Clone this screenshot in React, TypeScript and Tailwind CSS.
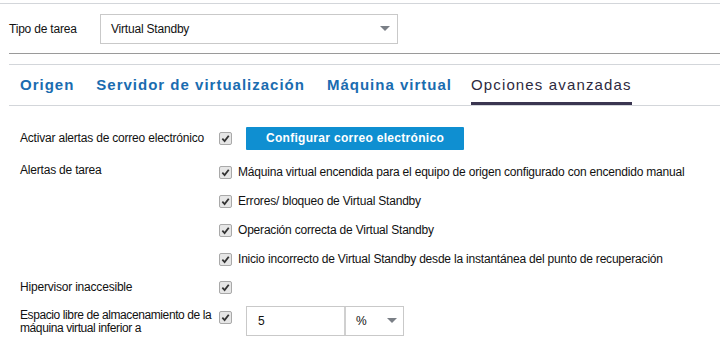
import React from "react";

const font = { fontFamily: '"Liberation Sans", Arial, sans-serif' };

const Check = () => (
  <span className="inline-flex items-center justify-center w-[13px] h-[13px] border border-[#a9a9a9] bg-[#e6e6e6] rounded-[2px] shrink-0">
    <svg width="9" height="9" viewBox="0 0 10 10">
      <path d="M1.5 5.2 L4 7.8 L8.6 2" fill="none" stroke="#333" strokeWidth="2" />
    </svg>
  </span>
);

const Caret = () => (
  <svg width="10" height="6" viewBox="0 0 10 6">
    <path d="M0 0 H10 L5 5 Z" fill="#7a7f86" />
  </svg>
);

const alerts = [
  "Máquina virtual encendida para el equipo de origen configurado con encendido manual",
  "Errores/ bloqueo de Virtual Standby",
  "Operación correcta de Virtual Standby",
  "Inicio incorrecto de Virtual Standby desde la instantánea del punto de recuperación",
];

const tabs = ["Origen", "Servidor de virtualización", "Máquina virtual", "Opciones avanzadas"];

export default function App() {
  return (
    <div className="w-[720px] h-[359px] bg-white text-[#111] overflow-hidden" style={font}>
      <div className="h-[4px] border-b border-[#d3d6da]" />

      {/* Tipo de tarea */}
      <div className="flex items-center pl-[9px] pt-[10px] h-[40px]">
        <span className="w-[91px] text-[12px] tracking-[-0.2px]">Tipo de tarea</span>
        <div className="w-[298px] h-[30px] border border-[#c9c9c9] flex items-center justify-between pl-[10px] pr-[7px] text-[12px] tracking-[-0.2px]">
          <span>Virtual Standby</span>
          <Caret />
        </div>
      </div>

      <div className="ml-[9px] mt-[9px] border-t border-[#9a9a9a]" />
      <div className="ml-[9px] mt-[10px] border-t border-[#d3d6da]" />

      {/* Tabs */}
      <div className="ml-[9px] flex gap-[22px] pl-[11px] h-[41px] border-b border-[#d3d6da] text-[15px]">
        {tabs.map((t, i) => (
          <div
            key={t}
            className={
              i === 3
                ? "flex items-center text-[#2e2a40] border-b-[3px] border-[#3a3550] pt-[3px] tracking-[1.15px] -ml-[3px]"
                : "flex items-center text-[#1a6cb0] font-bold tracking-[1px] pt-[3px] pb-[3px]"
            }
          >
            {t}
          </div>
        ))}
      </div>

      {/* Form */}
      <div className="pl-[20px] pt-[20px] text-[12px] tracking-[-0.2px]">
        <div className="flex items-center h-[24px]">
          <span className="w-[199px]">Activar alertas de correo electrónico</span>
          <Check />
          <button className="ml-[14px] w-[218px] h-[23px] bg-[#0f8fd1] text-white font-bold text-[12px] tracking-[0.3px] rounded-[1px]">
            Configurar correo electrónico
          </button>
        </div>

        <div className="flex mt-[10px]">
          <span className="w-[199px] leading-[20px]">Alertas de tarea</span>
          <div className="flex flex-col gap-[9px] pt-[2px]">
            {alerts.map((a) => (
              <div key={a} className="flex items-center gap-[6px] h-[20px]">
                <Check />
                <span>{a}</span>
              </div>
            ))}
          </div>
        </div>

        <div className="flex items-center h-[20px] mt-[8px]">
          <span className="w-[199px]">Hipervisor inaccesible</span>
          <Check />
        </div>

        <div className="flex items-start mt-[9px]">
          <span className="w-[199px] leading-[13px] pt-[3px] tracking-[-0.4px]">
            Espacio libre de almacenamiento de la máquina virtual inferior a
          </span>
          <div className="pt-[3px]">
            <Check />
          </div>
          <div className="ml-[14px] flex h-[30px] border border-[#c9c9c9]">
            <div className="w-[99px] border-r-[2px] border-[#d0d0d0] flex items-center pl-[11px]">5</div>
            <div className="w-[57px] flex items-center justify-between pl-[10px] pr-[6px]">
              <span>%</span>
              <Caret />
            </div>
          </div>
        </div>
      </div>
    </div>
  );
}
